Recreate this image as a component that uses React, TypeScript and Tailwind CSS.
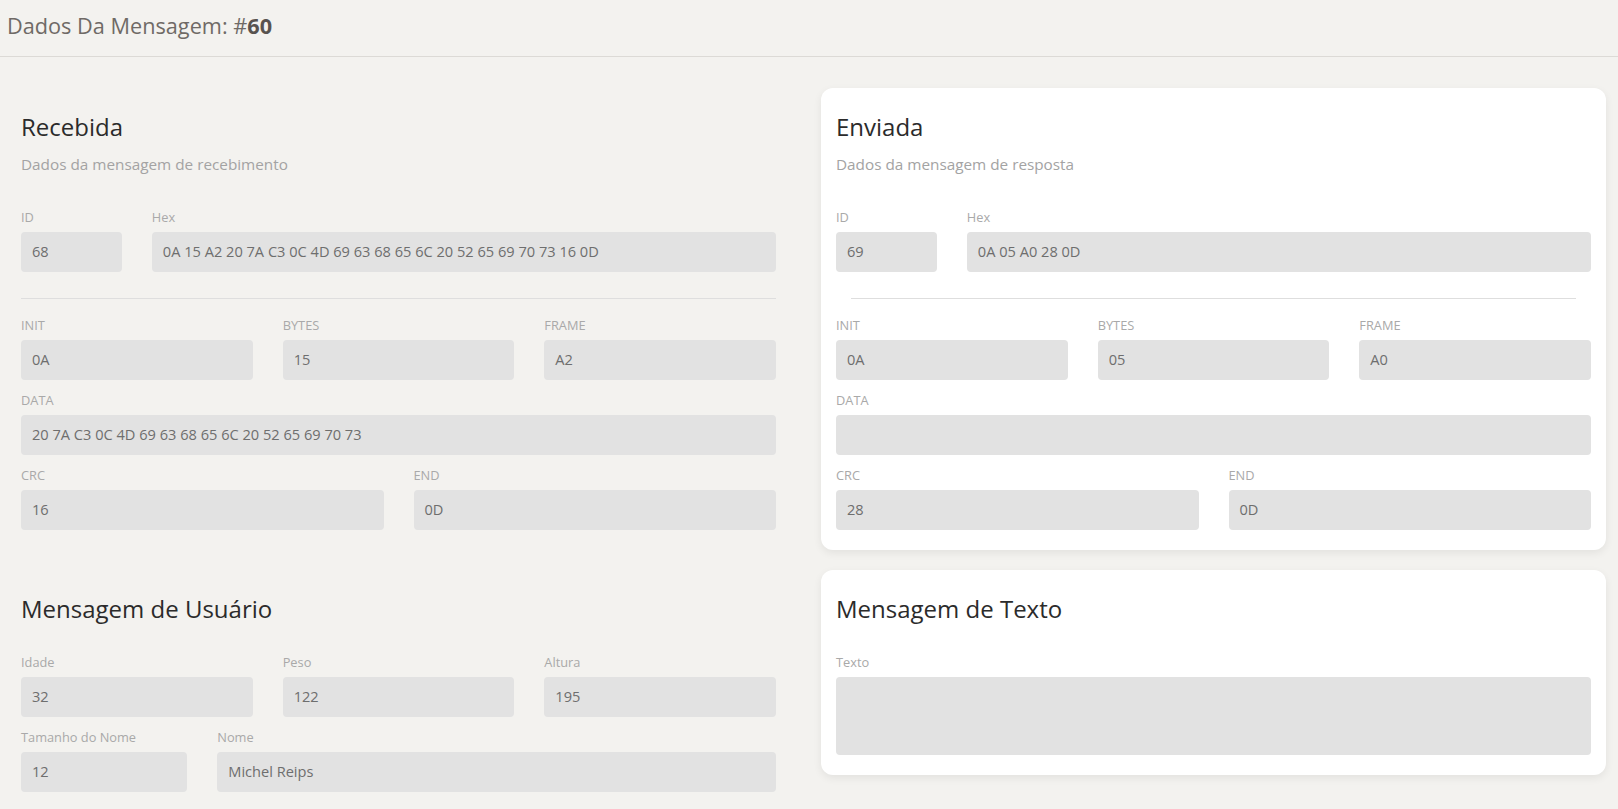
import React from 'react';

const font = { fontFamily: '"Open Sans", "Liberation Sans", sans-serif' };

interface FieldProps {
  label: string;
  value?: string;
  span: string;
  tall?: boolean;
  last?: boolean;
}

function Field({ label, value = '', span, tall, last }: FieldProps) {
  return (
    <div className={`${span} ${last ? '' : 'mb-3'}`}>
      <div className="text-[12.8px] leading-[16px] mb-[7px] text-[#a9a9a9]">{label}</div>
      <div
        className={`${tall ? 'h-[78px]' : 'h-[40px]'} rounded-[4px] bg-[#e2e2e2] px-[11px] flex ${tall ? 'items-start pt-[9px]' : 'items-center'} text-[14.6px] text-[#6e6e6e] whitespace-nowrap overflow-hidden`}
      >
        {value}
      </div>
    </div>
  );
}

interface MsgProps {
  title: string;
  subtitle: string;
  id: string;
  hex: string;
  init: string;
  bytes: string;
  frame: string;
  data: string;
  crc: string;
  end: string;
  card?: boolean;
}

function MessageCard({ title, subtitle, id, hex, init, bytes, frame, data, crc, end, card }: MsgProps) {
  return (
    <section
      className={`rounded-[12px] px-[15px] pt-[23px] pb-[20px] ${card ? 'bg-white shadow-[0_3px_8px_rgba(0,0,0,0.07)]' : ''}`}
    >
      <h2 className="text-[24px] leading-[32px] text-[#2b2b2b] mb-[9px]">{title}</h2>
      <p className="text-[15.3px] leading-[24px] text-[#a3a3a3] mb-[33px]">{subtitle}</p>
      <div className="grid grid-cols-12 gap-x-[30px]">
        <Field label="ID" value={id} span="col-span-2" />
        <Field label="Hex" value={hex} span="col-span-10" />
      </div>
      <div className={`mt-[14px] mb-[18px] border-t border-[#dedede] ${card ? 'mx-[15px]' : ''}`} />
      <div className="grid grid-cols-3 gap-x-[30px]">
        <Field label="INIT" value={init} span="col-span-1" />
        <Field label="BYTES" value={bytes} span="col-span-1" />
        <Field label="FRAME" value={frame} span="col-span-1" />
      </div>
      <Field label="DATA" value={data} span="" />
      <div className="grid grid-cols-2 gap-x-[30px]">
        <Field label="CRC" value={crc} span="col-span-1" last />
        <Field label="END" value={end} span="col-span-1" last />
      </div>
    </section>
  );
}

export default function App() {
  return (
    <div className="min-h-screen bg-[#f3f2ef]" style={font}>
      <header className="h-[57px] border-b border-[#dcdad6] flex items-center pl-[7px] pb-[3px]">
        <h1 className="text-[21.7px] text-[#6f6a66]">
          Dados Da Mensagem: #<span className="font-bold text-[#58534f]">60</span>
        </h1>
      </header>

      <main className="grid grid-cols-2 gap-x-[30px] gap-y-[20px] items-start pl-[6px] pr-[12px] pt-[31px]">
        <MessageCard
          title="Recebida"
          subtitle="Dados da mensagem de recebimento"
          id="68"
          hex="0A 15 A2 20 7A C3 0C 4D 69 63 68 65 6C 20 52 65 69 70 73 16 0D"
          init="0A"
          bytes="15"
          frame="A2"
          data="20 7A C3 0C 4D 69 63 68 65 6C 20 52 65 69 70 73"
          crc="16"
          end="0D"
        />
        <MessageCard
          card
          title="Enviada"
          subtitle="Dados da mensagem de resposta"
          id="69"
          hex="0A 05 A0 28 0D"
          init="0A"
          bytes="05"
          frame="A0"
          data=""
          crc="28"
          end="0D"
        />

        <section className="rounded-[12px] px-[15px] pt-[23px] pb-[20px]">
          <h2 className="text-[24px] leading-[32px] text-[#2b2b2b] mb-[29px]">Mensagem de Usuário</h2>
          <div className="grid grid-cols-3 gap-x-[30px]">
            <Field label="Idade" value="32" span="col-span-1" />
            <Field label="Peso" value="122" span="col-span-1" />
            <Field label="Altura" value="195" span="col-span-1" />
          </div>
          <div className="grid grid-cols-12 gap-x-[30px]">
            <Field label="Tamanho do Nome" value="12" span="col-span-3" last />
            <Field label="Nome" value="Michel Reips" span="col-span-9" last />
          </div>
        </section>

        <section className="rounded-[12px] bg-white shadow-[0_3px_8px_rgba(0,0,0,0.07)] px-[15px] pt-[23px] pb-[20px]">
          <h2 className="text-[24px] leading-[32px] text-[#2b2b2b] mb-[29px]">Mensagem de Texto</h2>
          <Field label="Texto" span="" tall last />
        </section>
      </main>
    </div>
  );
}
